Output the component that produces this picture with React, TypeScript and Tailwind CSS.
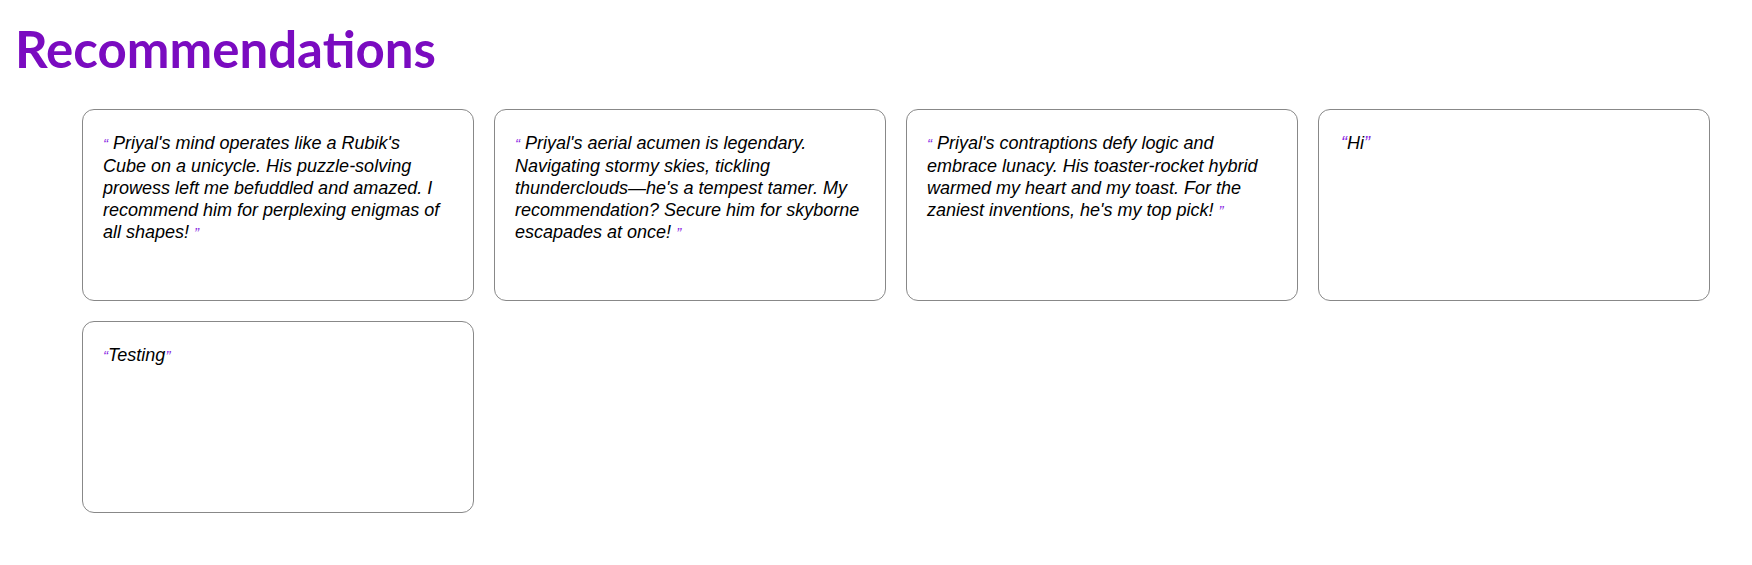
import React from 'react';

// Recommendation quotes shown on the profile page
const RECS = [
  { id: 1, text: "Priyal's mind operates like a Rubik's\nCube on a unicycle. His puzzle-solving prowess left me befuddled and amazed. I recommend him for perplexing enigmas of all shapes!", spaced: true },
  { id: 2, text: "Priyal's aerial acumen is legendary. Navigating stormy skies, tickling thunderclouds—he's a tempest tamer. My recommendation? Secure him for skyborne escapades at once!", spaced: true },
  { id: 3, text: "Priyal's contraptions defy logic and embrace lunacy. His toaster-rocket hybrid warmed my heart and my toast. For the zaniest inventions, he's my top pick!", spaced: true },
  { id: 4, text: "Hi", spaced: false, plain: true },
  { id: 5, text: "Testing", spaced: false },
];

export default function App() {
  return (
    <main className="min-h-screen bg-white text-black">
      <h1 className="px-[15px] pt-[19px] font-['Lato',sans-serif] text-[51px] font-bold leading-[60px] text-[#7a0bc0]">
        Recommendations
      </h1>

      <section className="ml-[82px] mt-[30px] grid w-[1628px] grid-cols-4 gap-x-5 gap-y-[20px]">
        {RECS.map((r) => (
          <div
            key={r.id}
            className="h-[192px] rounded-xl border border-[#888888] px-5 pt-[22px]"
          >
            <p
              className={`whitespace-pre-line font-['Liberation_Sans',sans-serif] text-[18px] italic leading-[22px] ${
                r.plain ? 'pl-[2px]' : ''
              }`}
            >
              <span className={`${r.plain ? 'text-[18px]' : 'text-[15px]'} text-[#8a2be2]`}>“</span>
              {r.spaced ? ' ' : ''}
              {r.text}
              {r.spaced ? ' ' : ''}
              <span className={`${r.plain ? 'text-[18px]' : 'text-[15px]'} text-[#8a2be2]`}>”</span>
            </p>
          </div>
        ))}
      </section>
    </main>
  );
}
